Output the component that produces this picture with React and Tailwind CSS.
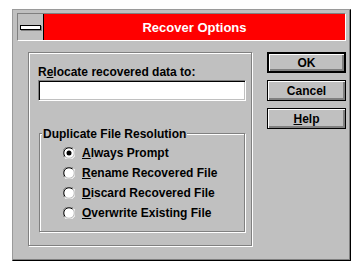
import React from 'react';

const font = { fontFamily: '"Liberation Sans", Arial, sans-serif' };

const Radio = ({ checked, children }) => (
  <div className="flex items-center gap-[7px] h-[20px]">
    <svg width="12" height="12" viewBox="0 0 12 12" className="shrink-0">
      <circle cx="6" cy="6" r="5.5" fill="#ffffff" />
      <path d="M1.5 10.5 A5.5 5.5 0 0 1 10.5 1.5" fill="none" stroke="#808080" strokeWidth="1" />
      <path d="M10.5 1.5 A5.5 5.5 0 0 1 1.5 10.5" fill="none" stroke="#ffffff" strokeWidth="1" />
      <path d="M2.3 9.7 A4.5 4.5 0 0 1 9.7 2.3" fill="none" stroke="#000000" strokeWidth="1" />
      <path d="M9.7 2.3 A4.5 4.5 0 0 1 2.3 9.7" fill="none" stroke="#c0c0c0" strokeWidth="1" />
      {checked && <circle cx="6" cy="6" r="2.5" fill="#000000" />}
    </svg>
    <span className="text-[12px] font-bold leading-[14px] text-black">{children}</span>
  </div>
);

const Button = ({ children, isDefault }) => (
  <button
    className={
      'w-[79px] h-[21px] bg-[#c0c0c0] text-[12px] font-bold leading-[14px] text-black flex items-center justify-center shadow-[inset_1px_1px_0_#ffffff,inset_-2px_-2px_0_#808080] ' +
      (isDefault ? 'border-2 border-black' : 'border border-black')
    }
  >
    {children}
  </button>
);

export default function App() {
  return (
    <div className="w-[360px] h-[271px] bg-white pl-[12px] pt-[9px]" style={font}>
      <div className="w-[339px] h-[252px] bg-[#c0c0c0] border-t border-l border-[#9a9a9a] border-r border-b border-r-black border-b-black shadow-[inset_-1px_-1px_0_#808080] pl-[4px] pt-[3px]">
        {/* title bar */}
        <div className="w-[329px] h-[28px] flex border-t border-l border-[#808080] border-r border-b border-r-white border-b-white">
          <div className="w-[26px] h-full flex items-center justify-center border-r border-black bg-[#c0c0c0]">
            <div className="w-[21px] h-[5px] bg-white border border-black shadow-[1px_1px_0_#808080]" />
          </div>
          <div className="flex-1 h-full bg-[#ff0000] flex items-center justify-center">
            <span className="text-white font-bold text-[13px] leading-[15px]">Recover Options</span>
          </div>
        </div>

        {/* body */}
        <div className="flex ml-[11px] mt-[11px]">
          <div className="w-[224px] h-[194px] border border-[#808080] shadow-[inset_1px_1px_0_#ffffff,1px_1px_0_#ffffff] pl-[9px] pt-[12px]">
            <div className="text-[12px] font-bold leading-[14px] text-black">
              R<u>e</u>locate recovered data to:
            </div>
            <div className="mt-[1px] w-[208px] h-[21px] bg-white border-t border-l border-[#808080] border-r border-b border-r-white border-b-white shadow-[inset_1px_1px_0_#000000,inset_-1px_-1px_0_#c0c0c0]" />

            <div className="relative mt-[32px] ml-[1px] w-[206px] h-[99px] border border-[#808080] shadow-[inset_1px_1px_0_#ffffff,1px_1px_0_#ffffff] pl-[23px] pt-[9px]">
              <span className="absolute -top-[7px] left-[2px] px-[1px] bg-[#c0c0c0] text-[12px] font-bold leading-[14px] text-black">
                Duplicate File Resolution
              </span>
              <Radio checked>
                <u>A</u>lways Prompt
              </Radio>
              <Radio>
                <u>R</u>ename Recovered File
              </Radio>
              <Radio>
                <u>D</u>iscard Recovered File
              </Radio>
              <Radio>
                <u>O</u>verwrite Existing File
              </Radio>
            </div>
          </div>

          <div className="ml-[15px] flex flex-col gap-[7px]">
            <Button isDefault>OK</Button>
            <Button>Cancel</Button>
            <Button>
              <span>
                <u>H</u>elp
              </span>
            </Button>
          </div>
        </div>
      </div>
    </div>
  );
}
